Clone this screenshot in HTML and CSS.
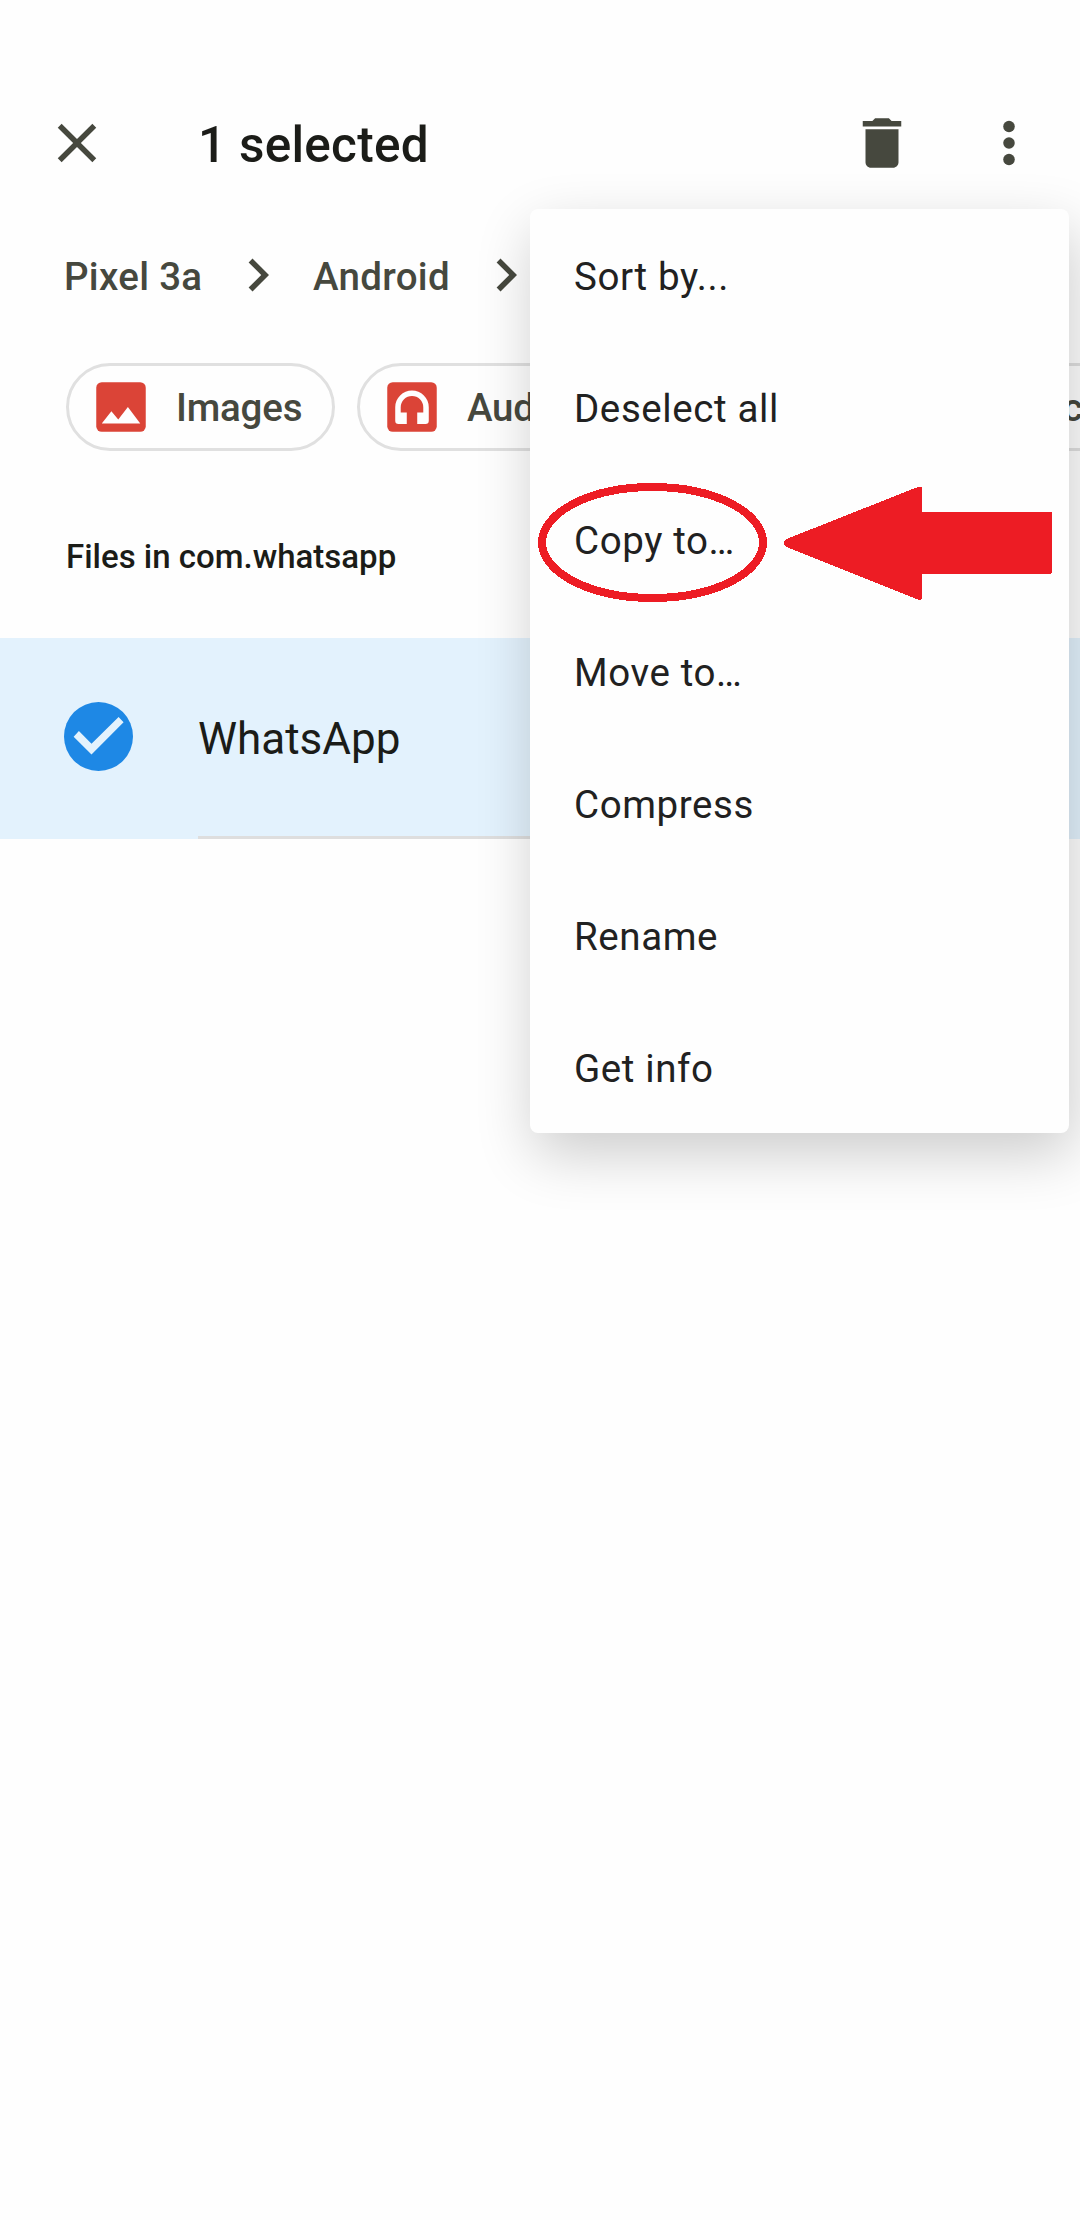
FILE: index.html
```html
<!DOCTYPE html>
<html lang="en">
<head>
<meta charset="utf-8">
<title>Files</title>
<link rel="stylesheet" href="styles.css">
</head>
<body>
<div class="screen">
  <header class="app-bar">
    <svg class="icon" viewBox="0 0 24 24"><path d="M19 6.41L17.59 5 12 10.59 6.41 5 5 6.41 10.59 12 5 17.59 6.41 19 12 13.41 17.59 19 19 17.59 13.41 12z"/></svg>
    <h1 class="title">1 selected</h1>
    <svg class="icon" viewBox="0 0 24 24"><path d="M6 19c0 1.1.9 2 2 2h8c1.1 0 2-.9 2-2V7H6v12zM19 4h-3.500l-1-1h-5l-1 1H5v2h14V4z"/></svg>
    <svg class="icon more" viewBox="0 0 24 24"><circle cx="12" cy="6" r="2.100"/><circle cx="12" cy="12" r="2.100"/><circle cx="12" cy="18" r="2.100"/></svg>
  </header>

  <nav class="breadcrumb">
    <span class="crumb crumb-root">Pixel 3a</span>
    <svg class="icon chevron" viewBox="0 0 24 24"><path d="M10 6L8.590 7.410 13.170 12l-4.580 4.590L10 18l6-6z"/></svg>
    <span class="crumb crumb-dir">Android</span>
    <svg class="icon chevron" viewBox="0 0 24 24"><path d="M10 6L8.590 7.410 13.170 12l-4.580 4.590L10 18l6-6z"/></svg>
  </nav>

  <div class="chips">
    <div class="chip chip-images">
      <svg class="icon red" viewBox="0 0 24 24"><rect x="3" y="3" width="18" height="18" rx="2"/><path class="cut" d="M5 18l3.500-4.500 2.500 3.010L14.500 12l4.500 6z"/></svg>
      <span class="chip-label">Images</span>
    </div>
    <div class="chip chip-audio">
      <svg class="icon red" viewBox="0 0 24 24"><rect x="3" y="3" width="18" height="18" rx="2"/><path class="cut" d="M5.900 12.100a6.100 6.100 0 0 1 12.200 0V17a1.200 1.200 0 0 1-1.200 1.200h-3V14h2.200v-1.900a4.100 4.100 0 0 0-8.200 0V14h2.200v4.200h-3A1.200 1.200 0 0 1 5.900 17z"/></svg>
      <span class="chip-label">Audio</span>
    </div>
    <div class="chip chip-docs">
      <span class="chip-label">Documents</span>
    </div>
  </div>

  <h2 class="section">Files in com.whatsapp</h2>

  <div class="row">
    <svg class="check" viewBox="0 0 68 68"><circle cx="34" cy="34" r="34"/><path d="M9.500 34.300l5.200-5.700 12.400 12.500 26.700-26.300 4.900 5.100-31.600 31.800z"/></svg>
    <div class="row-body"><span>WhatsApp</span></div>
  </div>

  <div class="menu">
    <div class="item">Sort by...</div>
    <div class="item">Deselect all</div>
    <div class="item">Copy to…</div>
    <div class="item">Move to…</div>
    <div class="item">Compress</div>
    <div class="item">Rename</div>
    <div class="item">Get info</div>
  </div>

  <svg class="callout" viewBox="0 0 520 124">
    <ellipse cx="119.500" cy="61.500" rx="110.500" ry="55.500"/>
    <path d="M251 62q0-3 5-5L383.500 6.500q5.500-2 5.500 1V31H517q2 0 2 2V91q0 2-2 2H389v24q0 3-5.500 1L256 67q-5-2-5-5z"/>
  </svg>
</div>
</body>
</html>
```
FILE: styles.css
```css
* { box-sizing: border-box; }

body {
  margin: 0;
  background: #fefefe;
  font-family: Roboto, "Liberation Sans", sans-serif;
  color: #1b1c18;
}

.screen {
  position: relative;
  width: 1080px;
  height: 2220px;
  overflow: hidden;
}

.icon {
  flex: none;
  display: block;
  width: 66px;
  height: 66px;
  fill: #46483e;
}

.app-bar {
  display: flex;
  align-items: center;
  height: 132px;
  margin-top: 77px;
  padding: 0 38px 0 44px;
}

.title {
  flex: 1;
  margin: 0;
  padding: 3px 0 0 88px;
  font-size: 49.5px;
  font-weight: 500;
  letter-spacing: 0.25px;
}

.more { margin-left: 61px; }

.breadcrumb {
  display: flex;
  align-items: center;
  height: 132px;
  padding-left: 64px;
}

.crumb {
  padding-top: 3px;
  font-size: 38.5px;
  font-weight: 500;
  letter-spacing: 0.3px;
  color: #46483e;
  white-space: nowrap;
}

.crumb-root { width: 161px; }
.crumb-dir { width: 182px; padding-left: 22px; }

.chips {
  display: flex;
  gap: 22px;
  margin-top: 22px;
  padding-left: 66px;
}

.chip {
  flex: none;
  display: flex;
  align-items: center;
  height: 88px;
  padding-left: 19px;
  border: 3px solid #e0e0e0;
  border-radius: 44px;
}

.chip-images { width: 269px; }
.chip-audio { width: 260px; }
.chip-docs { width: 700px; padding-left: 352px; }

.chip-label {
  padding: 1px 0 0 22px;
  font-size: 38.5px;
  font-weight: 500;
  letter-spacing: -0.2px;
  color: #46483e;
}

.red { fill: #db4437; }
.cut { fill: #fefefe; }

.section {
  margin: 85px 0 0 66px;
  height: 102px;
  line-height: 42px;
  font-size: 33px;
  font-weight: 500;
}

.row {
  display: flex;
  align-items: center;
  height: 201px;
  padding-left: 64px;
  background: #e3f2fd;
}

.check {
  flex: none;
  width: 69px;
  height: 69px;
  margin-top: -4px;
  fill: #1e88e5;
}

.check path { fill: #e3f2fd; }

.row-body {
  display: flex;
  align-items: center;
  width: 860px;
  height: 201px;
  margin-left: 65px;
  padding-top: 3px;
  border-bottom: 3px solid #dedede;
  font-size: 44px;
}

.menu {
  position: absolute;
  left: 530px;
  top: 209px;
  width: 539px;
  border-radius: 8px;
  background: #fefefe;
  box-shadow: 4px 21px 58px rgba(0, 0, 0, 0.2);
}

.item {
  display: flex;
  align-items: center;
  height: 132px;
  padding: 3px 0 0 44px;
  font-size: 38.5px;
  letter-spacing: 0.6px;
  color: #212121;
}

.callout {
  position: absolute;
  left: 533px;
  top: 481px;
  width: 520px;
  height: 124px;
  fill: #ed1c24;
  shape-rendering: crispEdges;
}

.callout ellipse {
  fill: none;
  stroke: #ed1c24;
  stroke-width: 8px;
}
```
